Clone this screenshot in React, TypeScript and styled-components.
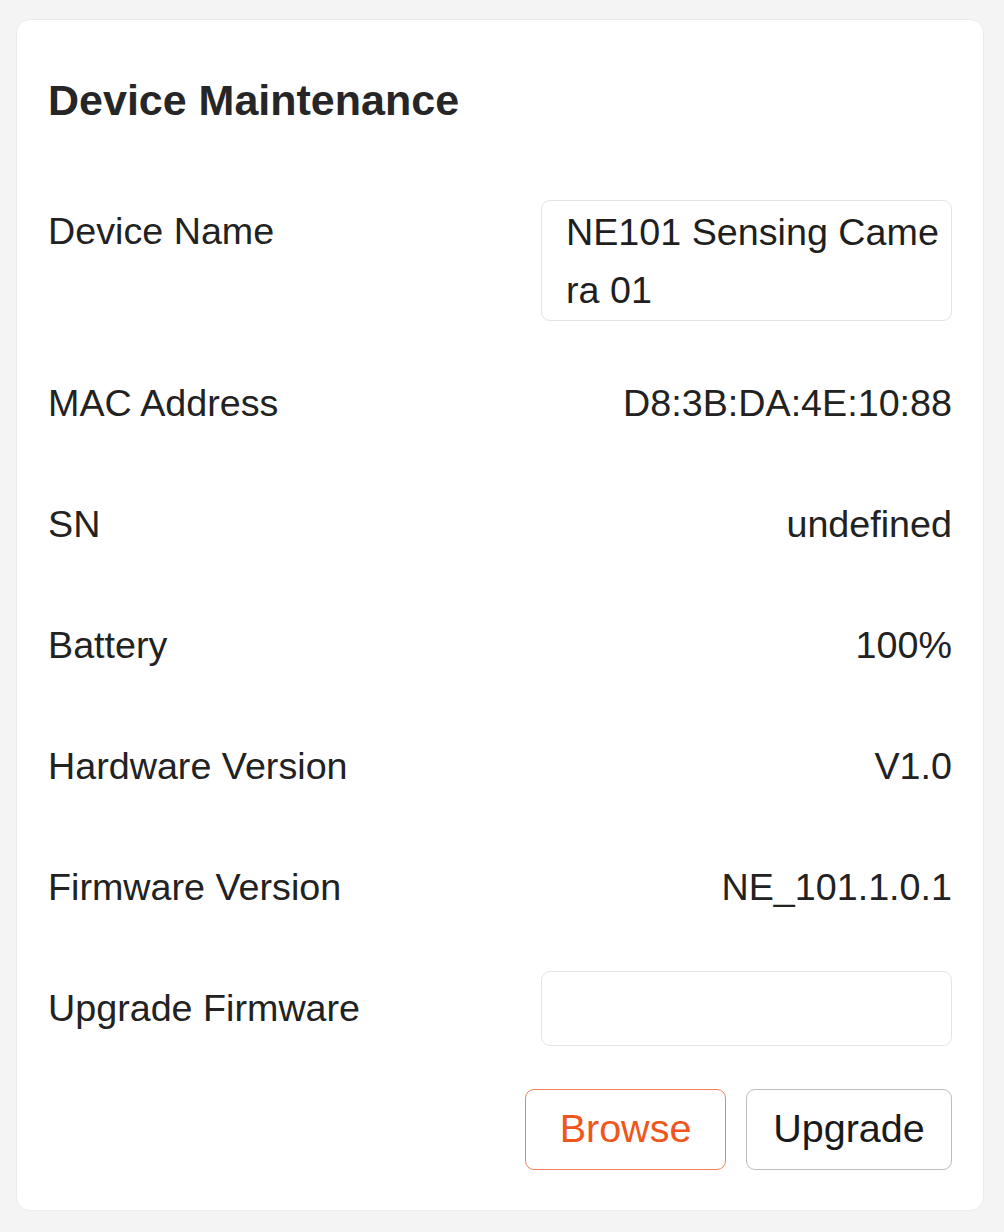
import React from "react";
import styled, { createGlobalStyle } from "styled-components";

const GlobalStyle = createGlobalStyle`
  html, body {
    margin: 0;
    padding: 0;
    background: #f4f4f4;
  }
  body {
    font-family: "Liberation Sans", Arial, Helvetica, sans-serif;
    color: #222222;
  }
  * { box-sizing: border-box; }
`;

const Page = styled.div`
  padding: 19px 20px 21px 16px;
  background: #f4f4f4;
`;

const Card = styled.section`
  background: #ffffff;
  border: 1px solid #ebebeb;
  border-radius: 14px;
  padding: 56px 31px 40px 31px;
`;

const Title = styled.h2`
  margin: 0 0 76px 0;
  font-size: 43px;
  line-height: 48px;
  font-weight: 700;
  color: #262626;
`;

const Rows = styled.div`
  display: flex;
  flex-direction: column;
`;

const Row = styled.div<{ $align: "center" | "flex-start"; $gap?: number }>`
  display: flex;
  justify-content: space-between;
  align-items: ${(p) => p.$align};
  min-height: 75px;
  margin-bottom: ${(p) => p.$gap ?? 46}px;
  &:last-of-type {
    margin-bottom: 0;
  }
`;

const Label = styled.span<{ $offset?: number }>`
  font-size: 37.7px;
  line-height: 57px;
  color: #222222;
  margin-top: ${(p) => p.$offset ?? 0}px;
`;

const Value = styled.span`
  font-size: 37.7px;
  line-height: 57px;
  color: #222222;
  text-align: right;
`;

const NameArea = styled.textarea`
  width: 411px;
  height: 121px;
  border: 1px solid #e4e4e4;
  border-radius: 9px;
  padding: 2px 6px 0 24px;
  font-family: "Liberation Sans", Arial, Helvetica, sans-serif;
  font-size: 37.7px;
  line-height: 58px;
  color: #1f1f1f;
  resize: none;
  overflow: hidden;
  word-break: break-all;
  outline: none;
  background: #ffffff;
`;

const FileField = styled.input`
  width: 411px;
  height: 75px;
  border: 1px solid #e4e4e4;
  border-radius: 9px;
  padding: 0 22px;
  font-family: "Liberation Sans", Arial, Helvetica, sans-serif;
  font-size: 37.7px;
  outline: none;
  background: #ffffff;
`;

const ButtonBar = styled.div`
  display: flex;
  justify-content: flex-end;
  gap: 20px;
  margin-top: 43px;
`;

const Button = styled.button<{ $variant: "primary" | "default"; $width: number }>`
  width: ${(p) => p.$width}px;
  height: 81px;
  border-radius: 9px;
  background: #ffffff;
  font-family: "Liberation Sans", Arial, Helvetica, sans-serif;
  font-size: 39.5px;
  display: flex;
  align-items: center;
  justify-content: center;
  padding: 0 0 3px 0;
  cursor: pointer;
  border: 1.5px solid
    ${(p) => (p.$variant === "primary" ? "#f2825e" : "#bdbdbd")};
  color: ${(p) => (p.$variant === "primary" ? "#f0561c" : "#1a1a1a")};
`;

const infoRows: { label: string; value: string }[] = [
  { label: "MAC Address", value: "D8:3B:DA:4E:10:88" },
  { label: "SN", value: "undefined" },
  { label: "Battery", value: "100%" },
  { label: "Hardware Version", value: "V1.0" },
  { label: "Firmware Version", value: "NE_101.1.0.1" },
];

export default function App() {
  return (
    <>
      <GlobalStyle />
      <Page>
        <Card>
          <Title>Device Maintenance</Title>
          <Rows>
            <Row $align="flex-start" $gap={45}>
              <Label $offset={3}>Device Name</Label>
              <NameArea defaultValue="NE101 Sensing Camera 01" rows={2} />
            </Row>
            {infoRows.map((r) => (
              <Row $align="center" key={r.label}>
                <Label>{r.label}</Label>
                <Value>{r.value}</Value>
              </Row>
            ))}
            <Row $align="center">
              <Label>Upgrade Firmware</Label>
              <FileField type="text" readOnly />
            </Row>
          </Rows>
          <ButtonBar>
            <Button $variant="primary" $width={201}>
              Browse
            </Button>
            <Button $variant="default" $width={206}>
              Upgrade
            </Button>
          </ButtonBar>
        </Card>
      </Page>
    </>
  );
}
